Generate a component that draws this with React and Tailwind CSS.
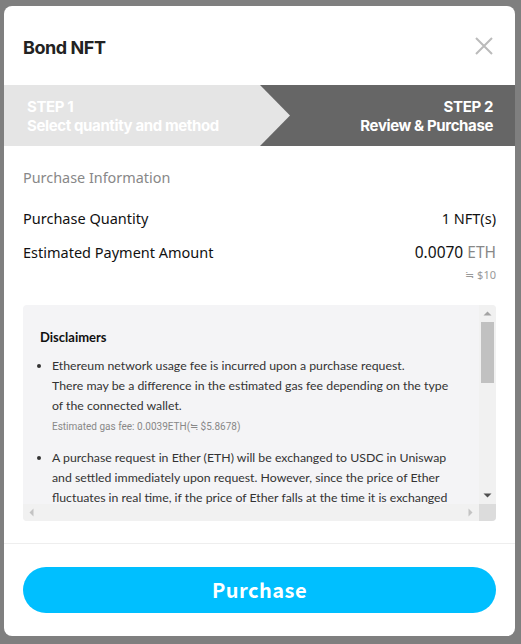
const body = { fontFamily: '"Noto Sans", "Open Sans", sans-serif' };
const head = { fontFamily: 'Inter, Roboto, sans-serif' };
const note = { fontFamily: 'Lato, "Noto Sans", sans-serif' };

function Arrow({ dir, color }) {
  const pts = {
    up: '4.5,10.5 12.5,10.5 8.5,6.5',
    down: '4.5,6.5 12.5,6.5 8.5,10.5',
    left: '10.5,4.5 10.5,12.5 6.5,8.5',
    right: '6.5,4.5 6.5,12.5 10.5,8.5',
  }[dir];
  return (
    <svg width="17" height="17" viewBox="0 0 17 17" className="shrink-0">
      <polygon points={pts} fill={color} />
    </svg>
  );
}

export default function App() {
  return (
    <div className="w-[521px] h-[644px] bg-[#7f7f7f] pl-[4px] pt-[6px] overflow-hidden">
      <div className="w-[511px] h-[630px] bg-white rounded-[8px] overflow-hidden flex flex-col">
        {/* header */}
        <div className="h-[79px] flex items-center justify-between pl-[19px] pr-[22px] pt-[4px]" style={head}>
          <h1 className="text-[18px] font-bold tracking-tight text-[#222]">Bond NFT</h1>
          <svg width="18" height="18" viewBox="0 0 18 18" className="text-[#bbbbbb] -mt-[3px]">
            <path d="M1 1 17 17M17 1 1 17" stroke="currentColor" strokeWidth="2" fill="none" />
          </svg>
        </div>

        {/* steps */}
        <div className="relative h-[61px] bg-[#666666]" style={head}>
          <div className="absolute inset-0 bg-[#e5e5e5] [clip-path:polygon(0_0,256px_0,286px_50%,256px_100%,0_100%)]" />
          <div className="relative h-full flex items-center justify-between pl-[23px] pr-[22px] text-white text-[15px] font-bold tracking-tight leading-[19px]">
            <div>
              <div>STEP 1</div>
              <div>Select quantity and method</div>
            </div>
            <div className="text-right">
              <div>STEP 2</div>
              <div>Review &amp; Purchase</div>
            </div>
          </div>
        </div>

        {/* info */}
        <div className="flex-1 px-[19px] pt-[21px]" style={body}>
          <div className="text-[14.4px] leading-[22px] text-[#888888]">Purchase Information</div>
          <div className="mt-[18px] flex justify-between text-[14.5px] leading-[22px] text-[#111111]">
            <span>Purchase Quantity</span>
            <span>1 NFT(s)</span>
          </div>
          <div className="mt-[12px] flex justify-between text-[14.5px] leading-[22px] text-[#111111]">
            <span>Estimated Payment Amount</span>
            <div className="text-right">
              <div className="text-[15.5px]">
                0.0070 <span className="text-[#888888]">ETH</span>
              </div>
              <div className="mt-[4px] text-[11px] leading-[16px] text-[#999999]">≒ $10</div>
            </div>
          </div>

          {/* disclaimers box with its scrollbars */}
          <div className="mt-[22px] h-[216px] rounded-[4px] bg-[#f4f4f6] overflow-hidden flex flex-col" style={note}>
            <div className="flex-1 min-h-0 flex">
              <div className="flex-1 overflow-hidden pl-[17px] pt-[22px] text-[12.3px] leading-[20px] text-[#333333]">
                <div className="text-[13px] font-bold text-[#111111]">Disclaimers</div>
                <ul className="mt-[9px] list-disc pl-[12px]">
                  <li className="whitespace-nowrap">
                    Ethereum network usage fee is incurred upon a purchase request.
                    <br />
                    There may be a difference in the estimated gas fee depending on the type
                    <br />
                    of the connected wallet.
                    <div className="mt-[3px] text-[10px] leading-[16px] text-[#888888]" style={{ fontFamily: 'Roboto, sans-serif' }}>
                      Estimated gas fee: 0.0039ETH(≒ $5.8678)
                    </div>
                  </li>
                  <li className="mt-[13px] whitespace-nowrap">
                    A purchase request in Ether (ETH) will be exchanged to USDC in Uniswap
                    <br />
                    and settled immediately upon request. However, since the price of Ether
                    <br />
                    fluctuates in real time, if the price of Ether falls at the time it is exchanged
                  </li>
                </ul>
              </div>
              <div className="w-[17px] bg-[#f1f1f1] flex flex-col">
                <Arrow dir="up" color="#a3a3a3" />
                <div className="flex-1">
                  <div className="mx-[2px] h-[61px] bg-[#c1c1c1]" />
                </div>
                <Arrow dir="down" color="#505050" />
              </div>
            </div>
            <div className="h-[17px] flex">
              <div className="flex-1 bg-[#f1f1f1] flex justify-between">
                <Arrow dir="left" color="#c3c3c3" />
                <Arrow dir="right" color="#c3c3c3" />
              </div>
              <div className="w-[17px] bg-[#dcdcdc]" />
            </div>
          </div>
        </div>

        {/* footer */}
        <div className="border-t border-[#eeeeee] px-[19px] pt-[23px] pb-[23px]">
          <button
            className="w-full h-[46px] rounded-full bg-[#00bfff] text-white text-[20px] font-bold tracking-wide"
            style={{ fontFamily: '"Noto Sans CJK KR", "Noto Sans", sans-serif' }}
          >
            Purchase
          </button>
        </div>
      </div>
    </div>
  );
}
